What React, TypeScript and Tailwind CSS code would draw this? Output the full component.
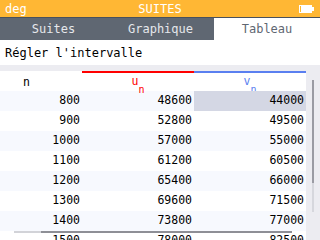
import React from "react";

const rows = [
  { n: "800", u: "48600", v: "44000" },
  { n: "900", u: "52800", v: "49500" },
  { n: "1000", u: "57000", v: "55000" },
  { n: "1100", u: "61200", v: "60500" },
  { n: "1200", u: "65400", v: "66000" },
  { n: "1300", u: "69600", v: "71500" },
  { n: "1400", u: "73800", v: "77000" },
  { n: "1500", u: "78000", v: "82500" },
];

const Battery = () => (
  <svg width="15" height="8" viewBox="0 0 15 8">
    <rect x="0" y="0" width="13" height="8" fill="#fff" />
    <rect x="1" y="1" width="1" height="6" fill="#ffb734" />
    <rect x="13" y="2" width="2" height="4" fill="#fff" />
  </svg>
);

export default function App() {
  return (
    <div className="relative w-[320px] h-[240px] overflow-hidden bg-[#ececf1] font-['DejaVu_Sans_Mono',monospace] text-[11.5px] leading-none">
      <div className="h-[17px] bg-[#ffb734] flex items-center justify-between pl-[5px] pr-[6px] text-white text-[12px]">
        <span>deg</span>
        <span className="absolute left-0 right-0 text-center pointer-events-none">SUITES</span>
        <Battery />
      </div>
      <div className="h-px bg-[#4a515c]" />
      <div className="h-[22px] grid grid-cols-[107px_107px_106px] bg-[#5f6772] text-[12px]">
        <div className="flex items-center justify-center text-[#e6e8ec]">Suites</div>
        <div className="flex items-center justify-center text-[#e6e8ec]">Graphique</div>
        <div className="flex items-center justify-center bg-white text-[#5f6772]">Tableau</div>
      </div>
      <div className="h-[25px] bg-white flex items-center pl-[5px] text-black text-[12px]">
        Régler l'intervalle
      </div>
      <div className="h-[6px]" />
      <div className="flex">
        <div className="w-[306px]">
          <div className="h-[20px] grid grid-cols-[82px_112px_112px] bg-white">
            <div className="pl-[23px] pt-[6px] text-black">n</div>
            <div className="border-t-2 border-[#ff0000] flex justify-center pt-[3px] text-[#ff0000]">
              <span>u</span>
              <span className="text-[10px] mt-[9px]">n</span>
            </div>
            <div className="border-t-2 border-[#5a7ff0] flex justify-center pt-[3px] text-[#5a7ff0]">
              <span>v</span>
              <span className="text-[10px] mt-[9px]">n</span>
            </div>
          </div>
          {rows.map((r, i) => (
            <div
              key={r.n}
              className={`h-[20px] grid grid-cols-[82px_112px_112px] items-center text-black ${i % 2 === 0 ? "bg-[#f7f9fe]" : "bg-white"}`}
            >
              <div className="text-right pr-[2px]">{r.n}</div>
              <div className="text-right pr-[2px]">{r.u}</div>
              <div className={`h-full flex items-center justify-end pr-[2px] ${i === 0 ? "bg-[#d4d7e4]" : ""}`}>{r.v}</div>
            </div>
          ))}
        </div>
        <div className="w-[14px] pt-[9px] pl-[6px]">
          <div className="w-[2px] h-[132px] bg-[#d6d7dd]">
            <div className="w-[2px] h-[103px] bg-[#9a9ba3]" />
          </div>
        </div>
      </div>
      <div className="absolute left-[14px] top-[231px] w-[278px] h-[2px] flex">
        <div className="w-[27px] bg-[#d2d3d8]" />
        <div className="flex-1 bg-[#8e8f96]" />
      </div>
    </div>
  );
}
